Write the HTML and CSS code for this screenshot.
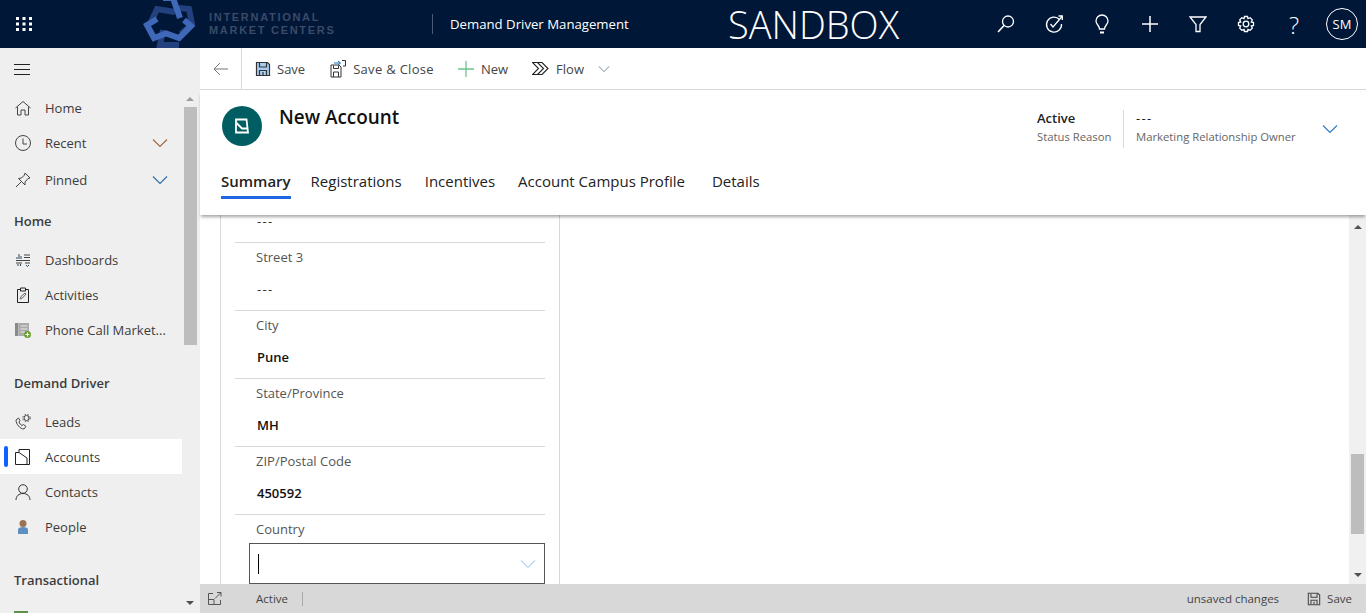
FILE: index.html
```html
<!DOCTYPE html>
<html>
	<head>
		<meta charset="UTF-8">
		<title>New Account</title>
		<link rel="stylesheet" href="styles.css">
	</head>
	<body>
		<svg class="defs" width="0" height="0">
			<symbol id="chev" viewBox="0 0 16 10"><path d="M1 1.500L8 8.500L15 1.500" fill="none" stroke="currentColor" stroke-width="1.100"/></symbol>
			<symbol id="floppy" viewBox="0 0 16 16">
				<path d="M1.500 1.500H12.500L14.500 3.500V14.500H1.500Z" fill="none" stroke="currentColor" stroke-width="1.200"/>
				<path d="M4.500 2V6H11.500V2" fill="none" stroke="currentColor" stroke-width="1.200"/>
				<path d="M4.500 14V9.500H11.500V14M8 11V14" fill="none" stroke="currentColor" stroke-width="1.200"/>
			</symbol>
		</svg>

		<!-- top bar -->
		<header class="topbar">
			<svg class="waffle" width="16" height="14" viewBox="0 0 16 14" fill="#fff">
				<rect x="0" y="0" width="3" height="3"/><rect x="6.500" y="0" width="3" height="3"/><rect x="13" y="0" width="3" height="3"/>
				<rect x="0" y="5.500" width="3" height="3"/><rect x="6.500" y="5.500" width="3" height="3"/><rect x="13" y="5.500" width="3" height="3"/>
				<rect x="0" y="11" width="3" height="3"/><rect x="6.500" y="11" width="3" height="3"/><rect x="13" y="11" width="3" height="3"/>
			</svg>
			<svg class="logo" width="52" height="48" viewBox="0 0 52 48" fill="none" stroke-width="6">
				<path d="M8 22L14 9L32 12" stroke="#24417f"/>
				<path d="M36 8L46 9L49 24L38 34" stroke="#24417f"/>
				<path d="M20 30L17 45H36" stroke="#24417f"/>
				<path d="M20 -2H30L37 18" stroke="#3f68b8"/>
				<path d="M14 19L4 25L11 38L24 33" stroke="#3f68b8"/>
				<path d="M22 33L36 38L48 26L41 20" stroke="#3f68b8"/>
			</svg>
			<div class="logotext">INTERNATIONAL<br>MARKET CENTERS</div>
			<div class="appname">Demand Driver Management</div>
			<div class="sandbox">SANDBOX</div>
			<div class="topicons">
				<span class="topicon"><svg width="20" height="20" viewBox="0 0 20 20" fill="none" stroke="#fff" stroke-width="1.300"><circle cx="12" cy="7.500" r="5.500"/><path d="M8 11.500L2 18" stroke-width="1.600"/></svg></span>
				<span class="topicon"><svg width="20" height="20" viewBox="0 0 20 20" fill="none" stroke="#fff" stroke-width="1.300"><path d="M15.500 5.500A7.500 7.500 0 1 0 17.500 10"/><path d="M6.500 10L9 13L18 2.500"/><path d="M14.500 2H18.300V6"/></svg></span>
				<span class="topicon"><svg width="20" height="20" viewBox="0 0 20 20" fill="none" stroke="#fff" stroke-width="1.300"><path d="M7.500 15C7.500 11.500 4 10.500 4 7A6 6 0 0 1 16 7C16 10.500 12.500 11.500 12.500 15Z"/><path d="M8 18.500H12" stroke-width="2"/></svg></span>
				<span class="topicon"><svg width="18" height="18" viewBox="0 0 18 18" stroke="#fff" stroke-width="1.500"><path d="M9 1V17M1 9H17"/></svg></span>
				<span class="topicon"><svg width="18" height="18" viewBox="0 0 18 18" fill="none" stroke="#fff" stroke-width="1.300"><path d="M1 2H17L11 9.500V16.500H7V9.500Z"/></svg></span>
				<span class="topicon"><svg width="18" height="18" viewBox="0 0 18 18" fill="none" stroke="#fff" stroke-width="1.300"><circle cx="9" cy="9" r="2.800"/><path d="M7.500 1.500H10.500L11 3.700L13.200 2.700L15.300 4.800L14.300 7L16.500 7.500V10.500L14.300 11L15.300 13.200L13.200 15.300L11 14.300L10.500 16.500H7.500L7 14.300L4.800 15.300L2.700 13.200L3.700 11L1.500 10.500V7.500L3.700 7L2.700 4.800L4.800 2.700L7 3.700Z"/></svg></span>
				<span class="topicon help">?</span>
				<span class="topicon"><span class="avatar">SM</span></span>
			</div>
		</header>

		<div class="shell">
			<!-- left navigation -->
			<aside class="sidebar">
				<nav class="nav">
					<div class="burger"><svg width="16" height="11" viewBox="0 0 16 11" stroke="#222" stroke-width="1"><path d="M0 .5H16M0 5.500H16M0 10.500H16"/></svg></div>
					<a class="navitem">
						<svg class="navicon" width="16" height="16" viewBox="0 0 16 16" fill="none" stroke="#444" stroke-width="1"><path d="M.5 8L8 1.500L15.500 8M2.500 7V15H6V10H10V15H13.500V7"/></svg>
						<span>Home</span>
					</a>
					<a class="navitem">
						<svg class="navicon" width="16" height="16" viewBox="0 0 16 16" fill="none" stroke="#444" stroke-width="1"><circle cx="8" cy="8" r="7.500"/><path d="M8 3.500V9H12"/></svg>
						<span>Recent</span>
						<svg class="navchev" width="16" height="10"><use href="#chev"/></svg>
					</a>
					<a class="navitem pinned">
						<svg class="navicon" width="16" height="16" viewBox="0 0 16 16" fill="none" stroke="#444" stroke-width="1"><path d="M10 1L15 6L13 6.500L10 10L10 13L3.500 6.500L6.500 6L9.500 3Z"/><path d="M6 10L1 15"/></svg>
						<span>Pinned</span>
						<svg class="navchev" width="16" height="10"><use href="#chev"/></svg>
					</a>
					<div class="navhead first">Home</div>
					<a class="navitem">
						<svg class="navicon" width="16" height="16" viewBox="0 0 16 16" fill="none" stroke="#444" stroke-width="1"><path d="M1 8.500H15M9 3H15M9 5.500H15M10 11H15M1 11H7"/><path d="M2 7V5M4 7V2M6 7V4M3 14V12M5.500 14V12M11 13L12.500 14.500L14 13" stroke="#345"/></svg>
						<span>Dashboards</span>
					</a>
					<a class="navitem">
						<svg class="navicon" width="16" height="16" viewBox="0 0 16 16" fill="none" stroke="#222" stroke-width="1"><path d="M5 2.500H2.500V15.500H13.500V2.500H11M5.500 1H10.500V4H5.500Z"/><path d="M5 12L6 9.500L10 6L11 7L7.500 11Z" stroke="#666"/></svg>
						<span>Activities</span>
					</a>
					<a class="navitem">
						<svg class="navicon" width="16" height="16" viewBox="0 0 16 16"><rect x="0" y="1" width="3.500" height="13" fill="#8a8a8a"/><rect x="4" y="1" width="10" height="13" fill="#a9a9a9"/><path d="M5.500 4H12.500M5.500 7H12.500M5.500 10H10" stroke="#e8e8e8"/><circle cx="12.500" cy="12.500" r="3.500" fill="#6aa032"/><path d="M10.500 12.500H14.500M12.500 10.500V14.500" stroke="#fff"/></svg>
						<span>Phone Call Market...</span>
					</a>
					<div class="navhead second">Demand Driver</div>
					<a class="navitem">
						<svg class="navicon" width="16" height="16" viewBox="0 0 16 16" fill="none" stroke="#444" stroke-width="1"><path d="M3.500 4L1 6C1 10 5 15 9 15L11 12.500L8.500 10.500L7 11.500C5.500 10.500 4.500 9.500 4 8L5 6.500Z"/><circle cx="11.500" cy="4" r="2.500"/><circle cx="11.500" cy="4" r="3.700" stroke-dasharray="1.500 1.500"/></svg>
						<span>Leads</span>
					</a>
					<a class="navitem current">
						<svg class="navicon" width="16" height="16" viewBox="0 0 16 16" fill="none" stroke="#222" stroke-width="1"><path d="M4 3V.5H14.500V15.500H12"/><path d="M.5 3.500H4L12 9V15.500H.5Z"/></svg>
						<span>Accounts</span>
					</a>
					<a class="navitem">
						<svg class="navicon" width="16" height="16" viewBox="0 0 16 16" fill="none" stroke="#333" stroke-width="1"><circle cx="8" cy="5" r="4.300"/><path d="M1 16C1 12 4 9.500 8 9.500C12 9.500 15 12 15 16"/></svg>
						<span>Contacts</span>
					</a>
					<a class="navitem">
						<svg class="navicon" width="16" height="16" viewBox="0 0 16 16"><circle cx="8" cy="4.500" r="3.500" fill="#9c7350"/><path d="M3 15V10.500C3 9 5 8 8 8C11 8 13 9 13 10.500V15Z" fill="#5f8fc0"/></svg>
						<span>People</span>
					</a>
					<div class="navhead third">Transactional</div>
					<div class="clipicon"></div>
				</nav>
				<div class="navscroll">
					<span class="arrow up"></span>
					<span class="navthumb"></span>
					<span class="arrow down"></span>
				</div>
			</aside>

			<main class="content">
				<div class="commandbar">
					<span class="backbtn"><svg width="16" height="14" viewBox="0 0 16 14" fill="none" stroke="#777" stroke-width="1"><path d="M7 1L1 7L7 13M1 7H15"/></svg></span>
					<button class="cmd savecmd">
						<svg class="floppyblue" width="16" height="16" viewBox="0 0 16 16"><path d="M1 1H12.500L15 3.500V15H1Z" fill="#a9cdf0"/><use href="#floppy" width="16" height="16"/></svg>
						<span>Save</span>
					</button>
					<button class="cmd closecmd">
						<svg width="16" height="18" viewBox="0 0 16 18" fill="none"><path d="M1 5H9L11 7V17H1Z" stroke="#333"/><path d="M3.500 5.500V8.500H8.500V5.500M3.500 17V12H8.500V17" stroke="#333"/><path d="M4 3H10M8 1L10.500 3L8 5" stroke="#1a6fc0"/><path d="M12 .5H15.500V6H13" stroke="#333"/></svg>
						<span>Save &amp; Close</span>
					</button>
					<button class="cmd newcmd">
						<svg width="16" height="16" viewBox="0 0 16 16" stroke="#6cc48c" stroke-width="1.300"><path d="M8 0V16M0 8H16"/></svg>
						<span>New</span>
					</button>
					<button class="cmd flowcmd">
						<svg width="17" height="13" viewBox="0 0 17 13" fill="none" stroke="#222" stroke-width="1.100"><path d="M.5 .5H10L16 6.500L10 12.500H.5L6.500 6.500Z"/><path d="M5.500 .5L11.500 6.500L5.500 12.500"/></svg>
						<span>Flow</span>
					</button>
					<svg class="flowchev" width="12" height="8"><use href="#chev"/></svg>
				</div>

				<div class="formhead">
					<div class="headrow">
						<div class="entity"><svg width="16" height="16" viewBox="0 0 16 16" fill="none" stroke="#fff" stroke-width="1.800"><path d="M2 1.500H12.500L14 14.500H2Z"/><path d="M2.500 5L8 10.500H14"/></svg></div>
						<h1 class="title">New Account</h1>
						<div class="headfield">
							<div class="headval strong">Active</div>
							<div class="headlabel">Status Reason</div>
						</div>
						<div class="headfield owner">
							<div class="headval dash">---</div>
							<div class="headlabel">Marketing Relationship Owner</div>
						</div>
						<svg class="headchev" width="16" height="10"><use href="#chev"/></svg>
					</div>
					<div class="tabs">
						<a class="tab active">Summary</a>
						<a class="tab t2">Registrations</a>
						<a class="tab t3">Incentives</a>
						<a class="tab t4">Account Campus Profile</a>
						<a class="tab t5">Details</a>
					</div>
				</div>

				<div class="formbody">
					<div class="pane">
						<section class="card">
							<div class="row clipped"><div class="value dash">---</div></div>
							<div class="row">
								<div class="label">Street 3</div>
								<div class="value dash">---</div>
							</div>
							<div class="row">
								<div class="label">City</div>
								<div class="value bold">Pune</div>
							</div>
							<div class="row">
								<div class="label">State/Province</div>
								<div class="value bold">MH</div>
							</div>
							<div class="row">
								<div class="label">ZIP/Postal Code</div>
								<div class="value bold">450592</div>
							</div>
							<div class="row last">
								<div class="label">Country</div>
								<div class="lookup">
									<span class="caret"></span>
									<svg class="lookchev" width="16" height="10"><use href="#chev"/></svg>
								</div>
							</div>
						</section>
					</div>
					<div class="mainscroll">
						<span class="arrow up"></span>
						<span class="mainthumb"></span>
						<span class="arrow down"></span>
					</div>
				</div>

				<footer class="statusbar">
					<svg class="expand" width="14" height="13" viewBox="0 0 14 13" fill="none" stroke="#555" stroke-width="1"><path d="M5 1.500H.5V12.500H12.500V8M.5 7.500H6V12.500"/><path d="M7 6.500L13 .5M9 .5H13V4.500"/></svg>
					<span class="statusval">Active</span>
					<span class="statusdiv"></span>
					<span class="unsaved">unsaved changes</span>
					<svg class="floppygrey" width="14" height="14"><use href="#floppy"/></svg>
					<span class="statussave">Save</span>
				</footer>
			</main>
		</div>
	</body>
</html>
```

FILE: styles.css
```css
*{
	box-sizing: border-box;
}
html,body{
	margin: 0;
	height: 100%;
	overflow: hidden;
}
body{
	font-family: "Open Sans", "Liberation Sans", sans-serif;
	font-size: 13px;
	color: #333;
	background: #fff;
}
.defs{
	position: absolute;
}
a{
	color: inherit;
}

/* top bar */
.topbar{
	display: flex;
	align-items: center;
	height: 48px;
	background: #001738;
	color: #fff;
}
.waffle{
	margin-left: 16px;
}
.logo{
	margin-left: 111px;
}
.logotext{
	width: 223px;
	margin-left: 14px;
	font-family: "Liberation Sans", sans-serif;
	font-size: 11px;
	font-weight: bold;
	line-height: 13px;
	letter-spacing: 1.7px;
	color: #3b4a67;
}
.appname{
	width: 296px;
	padding-left: 17px;
	line-height: 20px;
	border-left: 1px solid #4a5a74;
	font-size: 13.200px;
}
.sandbox{
	font-size: 38px;
	font-weight: 300;
	line-height: 48px;
}
.topicons{
	display: flex;
	margin-left: auto;
}
.topicon{
	display: flex;
	align-items: center;
	justify-content: center;
	width: 48px;
	height: 48px;
}
.help{
	font-size: 24px;
	font-weight: 300;
}
.avatar{
	width: 32px;
	height: 32px;
	line-height: 30px;
	text-align: center;
	border: 1px solid #fff;
	border-radius: 50%;
	font-size: 13px;
}

.shell{
	display: flex;
	height: 565px;
}

/* left navigation */
.sidebar{
	display: flex;
	width: 200px;
	background: #efefef;
	flex: none;
}
.nav{
	width: 182px;
	overflow: hidden;
}
.burger{
	display: flex;
	align-items: center;
	height: 42px;
	padding-left: 14px;
}
.navitem{
	display: flex;
	align-items: center;
	height: 35px;
	padding-left: 15px;
	color: #3c3c3c;
	position: relative;
}
.navitem.pinned{
	margin-top: 2px;
}
.navicon{
	flex: none;
	margin-right: 14px;
}
.navchev{
	margin-left: auto;
	margin-right: 14px;
	color: #6b7b8c;
}
.navitem:nth-child(3) .navchev{
	color: #a5663a;
}
.navitem.pinned .navchev{
	color: #2b6ca8;
}
.navhead{
	display: flex;
	align-items: center;
	height: 20px;
	padding-left: 14px;
	font-weight: 600;
	color: #3c3c3c;
}
.navhead.first{
	margin: 14px 0 11px;
}
.navhead.second{
	margin: 26px 0 11px;
}
.navhead.third{
	margin-top: 26px;
}
.clipicon{
	width: 14px;
	height: 2px;
	margin: 21px 0 0 14px;
	background: #5f8f4f;
}
.current{
	background: #fff;
}
.current::before{
	content: "";
	position: absolute;
	left: 4px;
	top: 7px;
	width: 4px;
	height: 21px;
	border-radius: 2px;
	background: #0f62fe;
}
.navscroll{
	display: flex;
	flex-direction: column;
	align-items: center;
	width: 18px;
	padding-right: 2px;
}
.arrow{
	width: 0;
	height: 0;
	flex: none;
	border-left: 4px solid transparent;
	border-right: 4px solid transparent;
}
.arrow.up{
	border-bottom: 4px solid #9b9b9b;
}
.arrow.down{
	border-top: 4px solid #505050;
}
.navscroll .arrow.up{
	margin-top: 49px;
}
.navthumb{
	width: 13px;
	height: 238px;
	margin: 6px 0 auto;
	background: #bdbdbd;
}
.navscroll .arrow.down{
	margin-bottom: 8px;
}

/* main column */
.content{
	display: flex;
	flex-direction: column;
	flex: 1;
	min-width: 0;
}
.commandbar{
	display: flex;
	align-items: center;
	height: 42px;
	border-bottom: 1px solid #d8d8d8;
	flex: none;
}
.backbtn{
	display: flex;
	align-items: center;
	justify-content: center;
	width: 42px;
	height: 41px;
	border-right: 1px solid #d8d8d8;
}
.cmd{
	display: flex;
	align-items: center;
	gap: 7px;
	padding: 0;
	border: none;
	background: none;
	font: inherit;
	color: #444;
}
.savecmd{
	margin-left: 13px;
	gap: 6px;
}
.closecmd{
	margin-left: 25px;
}
.closecmd span{
	letter-spacing: .3px;
}
.newcmd{
	margin-left: 24px;
}
.flowcmd{
	margin-left: 24px;
	gap: 7px;
}
.flowchev{
	margin-left: 14px;
	color: #5a7184;
}
.floppyblue{
	color: #333;
}

/* form header */
.formhead{
	height: 125px;
	padding: 16px 0 0 22px;
	flex: none;
	position: relative;
	z-index: 1;
	background: #fff;
	box-shadow: 0 3px 3px -1px rgba(0,0,0,.35);
}
.headrow{
	display: flex;
	align-items: flex-start;
	height: 60px;
}
.entity{
	display: flex;
	align-items: center;
	justify-content: center;
	width: 40px;
	height: 40px;
	border-radius: 50%;
	background: #005e62;
	flex: none;
}
.title{
	margin: -2px 0 0 17px;
	font-size: 18.900px;
	font-weight: 600;
	color: #111;
}
.headfield{
	margin-top: 3px;
}
.headfield:nth-of-type(2){
	margin-left: auto;
	width: 86px;
}
.headfield.owner{
	width: 199px;
	padding-left: 12px;
	border-left: 1px solid #d8d8d8;
	height: 38px;
	margin-top: 4px;
}
.headval{
	font-size: 13px;
	line-height: 18px;
	color: #222;
}
.owner .headval{
	margin-top: -1px;
}
.dash{
	letter-spacing: 1.300px;
}
.strong{
	font-weight: 600;
}
.headlabel{
	margin-top: 1px;
	font-size: 11.300px;
	line-height: 17px;
	color: #666;
}
.headchev{
	margin: 18px 28px 0 0;
	color: #2b78c0;
}
.tabs{
	display: flex;
	align-items: flex-start;
	margin: 5px 0 0 -1px;
}
.tab{
	padding-bottom: 5px;
	font-size: 15px;
	line-height: 20px;
	color: #222;
}
.tab.active{
	font-weight: 600;
	border-bottom: 3px solid #2266e3;
}
.t2{
	margin-left: 20px;
}
.t3{
	margin-left: 23px;
}
.t4{
	margin-left: 23px;
}
.t5{
	margin-left: 27px;
}

/* form body */
.formbody{
	display: flex;
	flex: 1;
	min-height: 0;
}
.pane{
	flex: 1;
	padding-left: 20px;
}
.card{
	width: 340px;
	height: 100%;
	padding: 0 14px;
	border-left: 1px solid #d8d8d8;
	border-right: 1px solid #d8d8d8;
}
.row{
	height: 68px;
	border-bottom: 1px solid #d8d8d8;
}
.row.clipped{
	height: 28px;
	padding-top: 0;
}
.row.last{
	height: 70px;
	border-bottom: none;
}
.label{
	padding: 4px 0 0 21px;
	line-height: 20px;
	color: #555;
}
.value{
	padding: 12px 0 0 22px;
	line-height: 20px;
	color: #333;
}
.clipped .value{
	padding-top: 0;
	line-height: 13px;
}
.bold{
	font-weight: 600;
	color: #111;
}
.lookup{
	display: flex;
	align-items: center;
	height: 41px;
	margin: 4px 0 0 14px;
	padding: 0 8px;
	border: 1px solid #555;
}
.caret{
	width: 1px;
	height: 20px;
	background: #000;
}
.lookchev{
	margin-left: auto;
	color: #b4d4ee;
}
.mainscroll{
	display: flex;
	flex-direction: column;
	align-items: center;
	width: 17px;
	background: #f0f0f0;
	flex: none;
}
.mainscroll .arrow.up{
	margin-top: 10px;
	border-bottom-color: #505050;
}
.mainthumb{
	width: 13px;
	height: 80px;
	margin: auto 0 39px;
	background: #bdbdbd;
}
.mainscroll .arrow.down{
	margin-bottom: 7px;
}

/* status bar */
.statusbar{
	display: flex;
	align-items: center;
	height: 29px;
	background: #d8d8d8;
	font-size: 11.500px;
	color: #444;
	flex: none;
}
.expand{
	margin-left: 8px;
}
.statusval{
	margin-left: 34px;
}
.statusdiv{
	width: 1px;
	height: 14px;
	margin-left: 14px;
	background: #aaa;
}
.unsaved{
	margin-left: auto;
}
.floppygrey{
	margin-left: 28px;
	color: #444;
}
.statussave{
	margin: 0 14px 0 6px;
}
```
